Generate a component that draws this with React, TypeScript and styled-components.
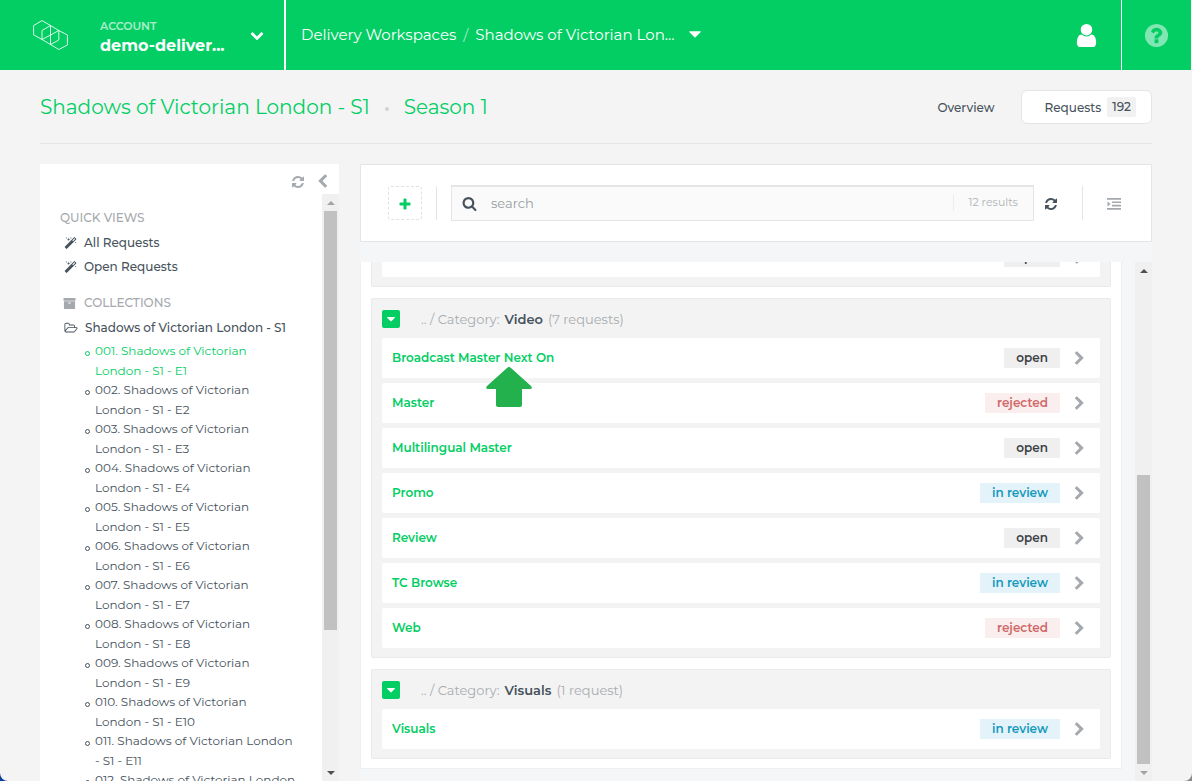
import React from "react";
import styled, { createGlobalStyle } from "styled-components";

const green = "#02ce64";
const ink = "#46525c";
const muted = "#a5a9ad";
const line = "#e4e5e7";

const GlobalStyle = createGlobalStyle`
  *, *::before, *::after { box-sizing: border-box; }
  body {
    margin: 0;
    background: linear-gradient(90deg, #0b3fa0 50%, #8a8a8a 50%);
    font-family: Montserrat, Inter, "Liberation Sans", sans-serif;
    font-size: 12px;
    color: ${ink};
  }
  a { color: inherit; text-decoration: none; }
  button, input { font: inherit; color: inherit; }
  button { border: 0; padding: 0; background: none; cursor: pointer; }
  ul { list-style: none; margin: 0; padding: 0; }
  h1, h2 { margin: 0; font-weight: inherit; }
`;

/* ---------- icons ---------- */

const paths = {
  refresh:
    "M1639 1056q0 5-1 7-64 268-268 434.5t-478 166.5q-146 0-282.5-55t-243.5-157l-129 129q-19 19-45 19t-45-19-19-45v-448q0-26 19-45t45-19h448q26 0 45 19t19 45-19 45l-137 137q71 66 161 102t187 36q134 0 250-65t186-179q11-17 53-117 8-23 30-23h192q13 0 22.5 9.5t9.5 22.5zm25-800v448q0 26-19 45t-45 19h-448q-26 0-45-19t-19-45 19-45l138-138q-148-137-349-137-134 0-250 65t-186 179q-11 17-53 117-8 23-30 23h-199q-13 0-22.5-9.5t-9.5-22.5v-7q65-268 270-434.5t480-166.5q146 0 284 55.5t245 156.5l130-129q19-19 45-19t45 19 19 45z",
  search:
    "M1216 832q0-185-131.5-316.5t-316.5-131.5-316.5 131.5-131.5 316.5 131.5 316.5 316.5 131.5 316.5-131.5 131.5-316.5zm512 832q0 52-38 90t-90 38q-54 0-90-38l-343-342q-179 124-399 124-143 0-273.5-55.5t-225-150-150-225-55.5-273.5 55.5-273.5 150-225 225-150 273.5-55.5 273.5 55.5 225 150 150 225 55.5 273.5q0 220-124 399l343 343q37 37 37 90z",
  user:
    "M1536 1399q0 109-62.5 187t-150.5 78h-854q-88 0-150.5-78t-62.5-187q0-85 8.5-160.5t31.5-152 58.5-131 94-89 134.5-34.5q131 128 313 128t313-128q76 0 134.5 34.5t94 89 58.5 131 31.5 152 8.5 160.5zm-256-887q0 159-112.5 271.5t-271.5 112.5-271.5-112.5-112.5-271.5 112.5-271.5 271.5-112.5 271.5 112.5 112.5 271.5z",
  help:
    "M1024 1376v-192q0-14-9-23t-23-9h-192q-14 0-23 9t-9 23v192q0 14 9 23t23 9h192q14 0 23-9t9-23zm256-672q0-88-55.5-163t-138.5-116-170-41q-243 0-371 213-15 24 8 42l132 100q7 6 19 6 16 0 25-12 53-68 86-92 34-24 86-24 48 0 85.5 26t37.5 59q0 38-20 61t-68 45q-63 28-115.5 86.5t-52.5 125.5v36q0 14 9 23t23 9h192q14 0 23-9t9-23q0-19 21.5-49.5t54.5-49.5q32-18 49-28.5t46-35 44.5-48 28-60.5 12.5-81zm384 192q0 209-103 385.5t-279.5 279.5-385.5 103-385.5-103-279.5-279.5-103-385.5 103-385.5 279.5-279.5 385.5-103 385.5 103 279.5 279.5 103 385.5z",
  right:
    "M1363 877l-742 742q-19 19-45 19t-45-19l-166-166q-19-19-19-45t19-45l531-531-531-531q-19-19-19-45t19-45l166-166q19-19 45-19t45 19l742 742q19 19 19 45t-19 45z",
  left:
    "M1427 301l-531 531 531 531q19 19 19 45t-19 45l-166 166q-19 19-45 19t-45-19l-742-742q-19-19-19-45t19-45l742-742q19-19 45-19t45 19l166 166q19 19 19 45t-19 45z",
  down:
    "M1683 808l-742 741q-19 19-45 19t-45-19l-742-741q-19-19-19-45.500t19-45.500l166-165q19-19 45-19t45 19l531 531 531-531q19-19 45-19t45 19l166 165q19 19 19 45.500t-19 45.500z",
  plus:
    "M1600 800v192q0 40-28 68t-68 28h-416v416q0 40-28 68t-68 28h-192q-40 0-68-28t-28-68v-416h-416q-40 0-68-28t-28-68v-192q0-40 28-68t68-28h416v-416q0-40 28-68t68-28h192q40 0 68 28t28 68v416h416q40 0 68 28t28 68z",
  archive:
    "M1088 832q0-26-19-45t-45-19h-256q-26 0-45 19t-19 45 19 45 45 19h256q26 0 45-19t19-45zm576-192v960q0 26-19 45t-45 19h-1408q-26 0-45-19t-19-45v-960q0-26 19-45t45-19h1408q26 0 45 19t19 45zm64-448v256q0 26-19 45t-45 19h-1536q-26 0-45-19t-19-45v-256q0-26 19-45t45-19h1536q26 0 45 19t19 45z",
  folder:
    "M1845 931q0-35-53-35h-1088q-40 0-85.5 21.500t-71.500 52.500l-294 363q-18 24-18 40 0 35 53 35h1088q40 0 86-22t71-53l294-363q18-22 18-39zm-1141-163h768v-160q0-40-28-68t-68-28h-576q-40 0-68-28t-28-68v-64q0-40-28-68t-68-28h-320q-40 0-68 28t-28 68v853l256-315q44-53 116-87.500t140-34.500zm1269 163q0 62-46 120l-295 363q-43 53-116 87.500t-140 34.500h-1088q-92 0-158-66t-66-158v-960q0-92 66-158t158-66h320q92 0 158 66t66 158v32h544q92 0 158 66t66 158v160h192q54 0 99 24.500t67 70.500q15 32 15 68z",
  magic:
    "M1254 581l293-293-107-107-293 293zm447-293q0 27-18 45l-1286 1286q-18 18-45 18t-45-18l-198-198q-18-18-18-45t18-45l1286-1286q18-18 45-18t45 18l198 198q18 18 18 45zm-1351-190l98 30-98 30-30 98-30-98-98-30 98-30 30-98zm350 162l196 60-196 60-60 196-60-196-196-60 196-60 60-196zm930 478l98 30-98 30-30 98-30-98-98-30 98-30 30-98zm-640-640l98 30-98 30-30 98-30-98-98-30 98-30 30-98z",
  caret: "M1408 704q0 26-19 45l-448 448q-19 19-45 19t-45-19l-448-448q-19-19-19-45t19-45 45-19h896q26 0 45 19t19 45z",
  indent:
    "M0 128h1792v220h-1792zM640 560h1152v220h-1152zM640 990h1152v220h-1152zM0 1420h1792v220h-1792zM60 560l400 325l-400 325z",
};

function Icon({ name, size }: { name: keyof typeof paths; size: number }) {
  return (
    <svg
      width={size}
      height={size}
      viewBox={name === "folder" ? "0 0 2048 1792" : "0 0 1792 1792"}
      fill="currentColor"
      aria-hidden="true"
    >
      <path d={paths[name]} />
    </svg>
  );
}

/* ---------- page ---------- */

const Page = styled.div`
  display: flex;
  flex-direction: column;
  height: 100vh;
  overflow: hidden;
  background: #f4f4f4;
  border-radius: 0 0 8px 8px;
`;

const TopBar = styled.header`
  flex: none;
  display: flex;
  height: 70px;
  background: ${green};
  border-right: 1px solid #f4f4f4;
  color: #fff;
`;

const Account = styled.button`
  display: flex;
  align-items: center;
  width: 286px;
  padding: 0 20px 0 33px;
  border-right: 2px solid #fff;
  text-align: left;
`;

const AccountText = styled.span`
  flex: 1;
  display: flex;
  flex-direction: column;
  margin-left: 32px;
  padding-top: 2px;
  font-size: 16px;
  line-height: 20px;
  font-weight: 700;
`;

const AccountLabel = styled.span`
  font-size: 11px;
  font-weight: 600;
  opacity: 0.65;
`;

const Crumbs = styled.nav`
  flex: 1;
  display: flex;
  align-items: center;
  gap: 7px;
  padding: 0 0 2px 15px;
  font-size: 15px;
`;

const Slash = styled.span`
  opacity: 0.6;
`;

const CrumbButton = styled.button`
  display: flex;
  align-items: center;
  gap: 11px;
`;

const TopAction = styled.button<{ $dim?: boolean }>`
  display: flex;
  align-items: center;
  justify-content: center;
  width: 70px;
  border-left: ${(p) => (p.$dim ? "1px solid #fff" : "0")};
  color: ${(p) => (p.$dim ? "rgba(255,255,255,0.5)" : "#fff")};
`;

const TitleRow = styled.div`
  flex: none;
  display: flex;
  align-items: center;
  height: 74px;
  margin: 0 40px;
  border-bottom: 1px solid ${line};
`;

const Title = styled.h1`
  flex: 1;
  display: flex;
  align-items: center;
  gap: 15px;
  font-size: 20px;
  color: ${green};
`;

const Dot = styled.span`
  width: 4px;
  height: 4px;
  margin-top: 4px;
  border-radius: 2px;
  background: #d0d2d4;
`;

const Tab = styled.a<{ $active?: boolean }>`
  display: flex;
  align-items: center;
  gap: 6px;
  height: 34px;
  padding: 1px ${(p) => (p.$active ? "15px 0 23px" : "26px 0")};
  border: ${(p) => (p.$active ? `1px solid ${line}` : "0")};
  border-radius: 6px;
  background: ${(p) => (p.$active ? "#fff" : "none")};
  font-weight: 500;
`;

const Count = styled.span`
  padding: 0 5px;
  border-radius: 2px;
  background: #f1f1f1;
  line-height: 20px;
`;

const Columns = styled.div`
  flex: 1;
  min-height: 0;
  display: flex;
  gap: 20px;
  padding: 20px 40px 0;
`;

/* ---------- scroll area ---------- */

const ScrollArea = styled.div`
  flex: 1;
  min-height: 0;
  display: flex;
`;

const Track = styled.div`
  flex: none;
  display: flex;
  flex-direction: column;
  align-items: center;
  width: 17px;
  background: #f0f0f0;
`;

const Arrow = styled.span<{ $up?: boolean; $dim?: boolean }>`
  flex: none;
  display: flex;
  align-items: center;
  height: 17px;
  &::before {
    content: "";
    border: 4px solid transparent;
    border-top-width: ${(p) => (p.$up ? "0" : "4px")};
    border-bottom-width: ${(p) => (p.$up ? "4px" : "0")};
    border-${(p) => (p.$up ? "bottom" : "top")}-color: ${(p) => (p.$dim ? "#a3a3a3" : "#505050")};
  }
`;

const Space = styled.span<{ $grow: number }>`
  flex: ${(p) => p.$grow} 1 0;
`;

const Thumb = styled(Space)`
  width: 13px;
  background: #c1c1c1;
`;

function ScrollBar({ before, thumb, after }: { before: number; thumb: number; after: number }) {
  return (
    <Track aria-hidden="true">
      <Arrow $up $dim={before === 0} />
      <Space $grow={before} />
      <Thumb $grow={thumb} />
      <Space $grow={after} />
      <Arrow $dim={after === 0} />
    </Track>
  );
}

/* ---------- sidebar ---------- */

const Sidebar = styled.aside`
  flex: none;
  display: flex;
  flex-direction: column;
  width: 299px;
  margin-right: 1px;
  background: #fff;
`;

const SideTools = styled.div`
  flex: none;
  display: flex;
  justify-content: flex-end;
  align-items: flex-end;
  gap: 10px;
  height: 30px;
  padding: 0 9px 5px;
  color: ${muted};
  svg { display: block; }
`;

const SideContent = styled.div`
  flex: 1;
  overflow: hidden;
  padding: 14px 10px 0 20px;
`;

const SideHeading = styled.h2<{ $spaced?: boolean }>`
  display: flex;
  align-items: center;
  gap: 8px;
  margin: ${(p) => (p.$spaced ? "14px 0 3px" : "0 0 3px")};
  padding-left: ${(p) => (p.$spaced ? "3px" : "0")};
  font-size: 12px;
  line-height: 20px;
  font-weight: 500;
  color: ${muted};
`;

const SideLink = styled.a`
  display: flex;
  align-items: center;
  gap: 7px;
  padding-left: 4px;
  line-height: 24px;
  font-weight: 500;
`;

const EpisodeList = styled.ul`
  margin-top: 1px;
`;

const Episode = styled.li<{ $active?: boolean }>`
  display: flex;
  gap: 5px;
  height: 39px;
  padding-left: 25px;
  line-height: 20px;
  white-space: pre-line;
  color: ${(p) => (p.$active ? green : ink)};
  &::before {
    content: "";
    flex: none;
    width: 5px;
    height: 5px;
    margin-top: 10px;
    border: 1px solid currentColor;
    border-radius: 3px;
  }
`;

/* ---------- main panel ---------- */

const Main = styled.main`
  flex: 1;
  min-width: 0;
  display: flex;
  flex-direction: column;
  background: #f5f6f8;
`;

const Toolbar = styled.div`
  flex: none;
  display: flex;
  align-items: center;
  height: 78px;
  margin-bottom: 20px;
  padding: 0 20px 0 27px;
  border: 1px solid ${line};
  background: #fff;
`;

const Divider = styled.span`
  width: 1px;
  height: 34px;
  margin: 0 14px;
  background: ${line};
`;

const ToolButton = styled.button<{ $tone: string; $dashed?: boolean }>`
  flex: none;
  display: flex;
  align-items: center;
  justify-content: center;
  width: 34px;
  height: 34px;
  padding-top: 2px;
  border: ${(p) => (p.$dashed ? "1px dashed #dfe1e3" : "0")};
  border-radius: 3px;
  color: ${(p) => p.$tone};
`;

const SearchBox = styled.label`
  flex: 1;
  display: flex;
  align-items: center;
  height: 36px;
  padding: 0 15px 0 10px;
  border: 1px solid ${line};
  border-top-width: 2px;
  background: #fafafa;
`;

const SearchInput = styled.input`
  flex: 1;
  min-width: 0;
  padding: 0 0 2px 14px;
  border: 0;
  outline: 0;
  background: none;
  font-size: 13px;
  &::placeholder { color: #989da1; opacity: 1; }
`;

const Results = styled.span`
  margin-bottom: 2px;
  padding: 0 0 2px 15px;
  border-left: 1px solid #ececec;
  font-size: 11px;
  line-height: 14px;
  color: #b0b4b7;
`;

const Clip = styled.div`
  flex: 1;
  display: flex;
  flex-direction: column;
  justify-content: flex-end;
  overflow: hidden;
  padding: 0 13px 12px 0;
`;

const Groups = styled.div`
  flex: none;
  display: flex;
  flex-direction: column;
  gap: 11px;
  padding: 0 10px 9px;
  border: 1px solid #eeeff1;
  border-top: 0;
  background: #fff;
`;

const Group = styled.section`
  padding: 0 10px 9px;
  border: 1px solid #e9eaeb;
  border-radius: 2px;
  background: #f3f3f3;
`;

const GroupHead = styled.h2`
  display: flex;
  align-items: center;
  gap: 5px;
  height: 39px;
  font-size: 13px;
  color: #a9adb0;
`;

const Toggle = styled.button`
  display: flex;
  align-items: center;
  justify-content: center;
  width: 18px;
  height: 18px;
  margin-right: 16px;
  border-radius: 2px;
  background: ${green};
  color: #fff;
`;

const GroupName = styled.b`
  font-weight: 600;
  color: ${ink};
`;

const Rows = styled.ul`
  display: flex;
  flex-direction: column;
  gap: 5px;
`;

const Row = styled.li`
  position: relative;
  display: flex;
  align-items: center;
  height: 40px;
  padding: 0 13px 0 10px;
  border-radius: 2px;
  background: #fff;
`;

const RowLink = styled.a`
  flex: 1;
  padding-bottom: 2px;
  font-weight: 600;
  color: ${green};
`;

type State = "open" | "rejected" | "in review";

const tones: Record<State, [string, string]> = {
  open: ["#efefef", "#3b4045"],
  rejected: ["#fbeeee", "#cf6868"],
  "in review": ["#e4f3f9", "#1499bd"],
};

const Badge = styled.span<{ $state: State }>`
  margin-right: 12px;
  padding: 0 12px;
  line-height: 20px;
  font-weight: 600;
  background: ${(p) => tones[p.$state][0]};
  color: ${(p) => tones[p.$state][1]};
`;

const Chevron = styled.button`
  display: flex;
  color: ${muted};
`;

const Pointer = styled.svg`
  position: absolute;
  z-index: 1;
  top: 29px;
  left: 104px;
`;

const groups: { name: string; count: string; rows: [string, State][] }[] = [
  {
    name: "Video",
    count: "(7 requests)",
    rows: [
      ["Broadcast Master Next On", "open"],
      ["Master", "rejected"],
      ["Multilingual Master", "open"],
      ["Promo", "in review"],
      ["Review", "open"],
      ["TC Browse", "in review"],
      ["Web", "rejected"],
    ],
  },
  { name: "Visuals", count: "(1 request)", rows: [["Visuals", "in review"]] },
];

const episodes = Array.from({ length: 12 }, (_, i) => {
  const n = i + 1;
  const num = String(n).padStart(3, "0");
  return n < 11
    ? `${num}. Shadows of Victorian\nLondon - S1 - E${n}`
    : `${num}. Shadows of Victorian London\n- S1 - E${n}`;
});

function RequestRow({ title, state, marked }: { title?: string; state: State; marked?: boolean }) {
  return (
    <Row>
      <RowLink href="#">{title}</RowLink>
      <Badge $state={state}>{state}</Badge>
      <Chevron aria-label="Show request">
        <Icon name="right" size={15} />
      </Chevron>
      {marked && (
        <Pointer width="46" height="40" viewBox="0 0 46 40" aria-hidden="true">
          <path d="M21 1Q23 -1 25 1L45 19Q47 22 44 22H36V38Q36 40 34 40H12Q10 40 10 38V22H2Q-1 22 1 19Z" fill="#22b14c" />
        </Pointer>
      )}
    </Row>
  );
}

export default function App() {
  return (
    <>
      <GlobalStyle />
      <Page>
        <TopBar>
          <Account>
            <svg width="35" height="30" viewBox="0 0 35 30" fill="none" stroke="#fff" strokeOpacity="0.85" aria-hidden="true">
              <path d="M9 .6L17.500 5.500V15L9 19.500L.6 14.800V5.500Z" />
              <path d="M17.500 5.500L25.800 10.500V20L17.500 24.500L9 19.500V10.500Z" />
              <path d="M25.800 10.500L34.400 15V25L25.800 29.500L17.500 24.500V15Z" />
            </svg>
            <AccountText>
              <AccountLabel>ACCOUNT</AccountLabel>
              demo-deliver...
            </AccountText>
            <Icon name="down" size={14} />
          </Account>
          <Crumbs>
            <a href="#">Delivery Workspaces</a>
            <Slash>/</Slash>
            <CrumbButton>
              Shadows of Victorian Lon...
              <Icon name="caret" size={20} />
            </CrumbButton>
          </Crumbs>
          <TopAction aria-label="User">
            <Icon name="user" size={27} />
          </TopAction>
          <TopAction $dim aria-label="Help">
            <Icon name="help" size={27} />
          </TopAction>
        </TopBar>

        <TitleRow>
          <Title>
            <span>Shadows of Victorian London - S1</span>
            <Dot />
            <span>Season 1</span>
          </Title>
          <Tab href="#">Overview</Tab>
          <Tab href="#" $active>
            Requests <Count>192</Count>
          </Tab>
        </TitleRow>

        <Columns>
          <Sidebar>
            <SideTools>
              <button aria-label="Refresh collections">
                <Icon name="refresh" size={14} />
              </button>
              <button aria-label="Collapse sidebar">
                <Icon name="left" size={15} />
              </button>
            </SideTools>
            <ScrollArea>
              <SideContent>
                <SideHeading>QUICK VIEWS</SideHeading>
                <SideLink href="#">
                  <Icon name="magic" size={13} />
                  All Requests
                </SideLink>
                <SideLink href="#">
                  <Icon name="magic" size={13} />
                  Open Requests
                </SideLink>
                <SideHeading $spaced>
                  <Icon name="archive" size={13} />
                  COLLECTIONS
                </SideHeading>
                <SideLink href="#">
                  <Icon name="folder" size={14} />
                  Shadows of Victorian London - S1
                </SideLink>
                <EpisodeList>
                  {episodes.map((text, i) => (
                    <Episode key={text} $active={i === 0}>
                      <a href="#">{text}</a>
                    </Episode>
                  ))}
                </EpisodeList>
              </SideContent>
              <ScrollBar before={0} thumb={419} after={134} />
            </ScrollArea>
          </Sidebar>

          <Main>
            <Toolbar>
              <ToolButton $tone={green} $dashed aria-label="Add request">
                <Icon name="plus" size={14} />
              </ToolButton>
              <Divider />
              <SearchBox>
                <Icon name="search" size={15} />
                <SearchInput type="text" placeholder="search" aria-label="search" />
                <Results>12 results</Results>
              </SearchBox>
              <ToolButton $tone={ink} aria-label="Refresh requests">
                <Icon name="refresh" size={14} />
              </ToolButton>
              <Divider />
              <ToolButton $tone={muted} aria-label="Toggle details">
                <Icon name="indent" size={14} />
              </ToolButton>
            </Toolbar>
            <ScrollArea>
              <Clip>
                <Groups>
                  <Group>
                    <Rows>
                      <RequestRow state="open" />
                    </Rows>
                  </Group>
                  {groups.map((group) => (
                    <Group key={group.name}>
                      <GroupHead>
                        <Toggle aria-label={`Collapse ${group.name}`}>
                          <Icon name="caret" size={14} />
                        </Toggle>
                        <span>.. / Category:</span>
                        <GroupName>{group.name}</GroupName>
                        <span>{group.count}</span>
                      </GroupHead>
                      <Rows>
                        {group.rows.map(([title, state], i) => (
                          <RequestRow
                            key={title}
                            title={title}
                            state={state}
                            marked={group.name === "Video" && i === 0}
                          />
                        ))}
                      </Rows>
                    </Group>
                  ))}
                </Groups>
              </Clip>
              <ScrollBar before={196} thumb={289} after={0} />
            </ScrollArea>
          </Main>
        </Columns>
      </Page>
    </>
  );
}
